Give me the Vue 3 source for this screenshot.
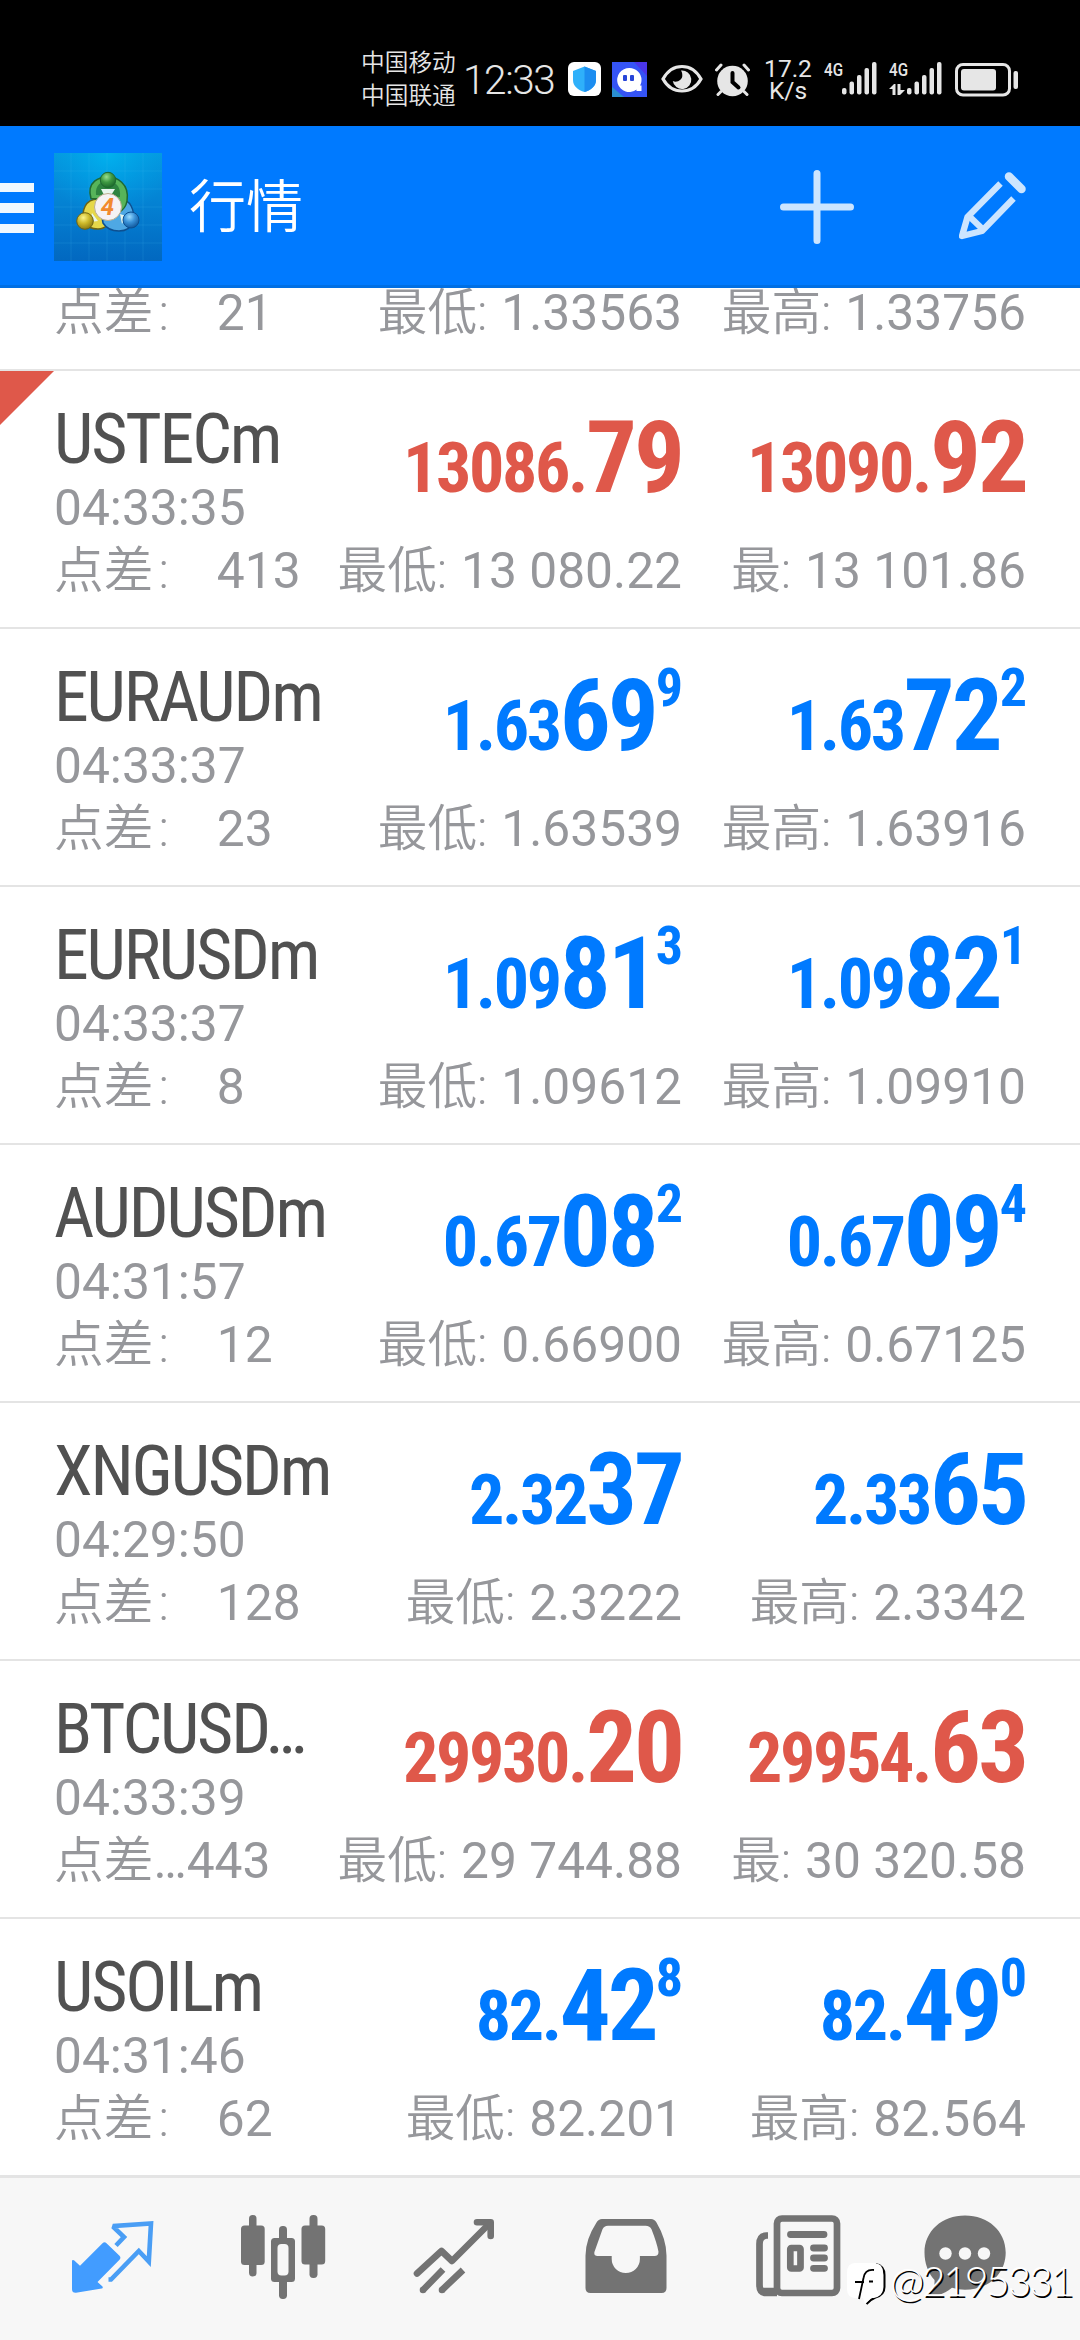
<script setup>
const rows = [
  { symbol: '', time: '', spread: '21', low: '1.33563', high: '1.33756', bid: ['', '', ''], ask: ['', '', ''] },
  { symbol: 'USTECm', time: '04:33:35', spread: '413', low: '13 080.22', high: '13 101.86', highLabel: '最', bid: ['13086.', '79', ''], ask: ['13090.', '92', ''], down: true, flag: true },
  { symbol: 'EURAUDm', time: '04:33:37', spread: '23', low: '1.63539', high: '1.63916', bid: ['1.63', '69', '9'], ask: ['1.63', '72', '2'] },
  { symbol: 'EURUSDm', time: '04:33:37', spread: '8', low: '1.09612', high: '1.09910', bid: ['1.09', '81', '3'], ask: ['1.09', '82', '1'] },
  { symbol: 'AUDUSDm', time: '04:31:57', spread: '12', low: '0.66900', high: '0.67125', bid: ['0.67', '08', '2'], ask: ['0.67', '09', '4'] },
  { symbol: 'XNGUSDm', time: '04:29:50', spread: '128', low: '2.3222', high: '2.3342', bid: ['2.32', '37', ''], ask: ['2.33', '65', ''] },
  { symbol: 'BTCUSD…', time: '04:33:39', spread: '443', tight: true, low: '29 744.88', high: '30 320.58', highLabel: '最', bid: ['29930.', '20', ''], ask: ['29954.', '63', ''], down: true },
  { symbol: 'USOILm', time: '04:31:46', spread: '62', low: '82.201', high: '82.564', bid: ['82.', '42', '8'], ask: ['82.', '49', '0'] },
]
const bars = [
  { x: 0, y: 26, h: 6.5 },
  { x: 7.5, y: 19.5, h: 13 },
  { x: 15, y: 13, h: 19.5 },
  { x: 22.5, y: 6, h: 26.5 },
  { x: 30, y: 0, h: 32.5 },
]
</script>

<template>
  <div class="screen">
    <div class="status">
      <div class="carriers"><span>中国移动</span><span>中国联通</span></div>
      <div class="clock">12:33</div>
      <svg class="s-shield" width="33" height="34" viewBox="0 0 33 34">
        <rect width="33" height="34" rx="6" fill="#fff" />
        <path d="M16.5 4.5 28 9v9c0 6-5 10-11.500 12C10 28 5 24 5 18V9z" fill="#2fb0fa" />
        <path d="M16.500 4.500 28 9v9c0 6-5 10-11.500 12z" fill="#1c8df0" />
      </svg>
      <svg class="s-ghost" width="35" height="35" viewBox="0 0 35 35">
        <rect width="35" height="35" fill="#3554f5" />
        <path d="M0 25 12 35H0z" fill="#2a8ed0" />
        <path d="M22 0h13v14z" fill="#4a35e8" />
        <path d="M17.500 6a12 12 0 0 1 12 12c0 2-.5 4-1.500 5.500h1.500V29h-5v-1.500A12 12 0 1 1 17.500 6z" fill="#fff" />
        <rect x="11" y="13" width="4" height="6" rx="1" fill="#2745d8" />
        <rect x="18" y="13" width="4" height="6" rx="1" fill="#2745d8" />
      </svg>
      <svg class="s-eye" width="42" height="30" viewBox="0 0 42 30" fill="none">
        <path d="M2 15C7 6 13.500 2.500 21 2.500S35 6 40 15C35 24 28.500 27 21 27S7 24 2 15z" stroke="#e6e6e6" stroke-width="3.200" />
        <path d="M20 6.500a9.300 9.300 0 1 1-8.200 10.500c4 2 10-1 9.500-6 0-2-.5-3-1.300-4.500z" fill="#e6e6e6" />
      </svg>
      <svg class="s-alarm" width="35" height="34" viewBox="0 0 35 34" fill="none" stroke-linecap="round">
        <path d="M1.500 7 6 2M33.500 7 29 2M6 28.500 3 31.500M29 28.500 32 31.500" stroke="#e6e6e6" stroke-width="3" />
        <circle cx="17.500" cy="18" r="15.300" fill="#e6e6e6" />
        <path d="M17.500 10v9l6 5.500" stroke="#000" stroke-width="4" />
      </svg>
      <div class="speed"><span>17.2</span><span>K/s</span></div>
      <div class="net"><span>4G</span></div>
      <svg class="s-bars" width="35" height="33" viewBox="0 0 35 33" fill="#e6e6e6">
        <rect v-for="b in bars" :key="b.x" :x="b.x" :y="b.y" width="4.500" :height="b.h" rx="2" />
      </svg>
      <div class="net second">
        <span>4G</span>
        <svg width="17" height="11" viewBox="0 0 17 11" fill="#e6e6e6"><path d="M0 5 5 0h1.500v11h-3V5zM8.500 0h3v6H16l-5 5H8.500z" /></svg>
      </div>
      <svg class="s-bars" width="35" height="33" viewBox="0 0 35 33" fill="#e6e6e6">
        <rect v-for="b in bars" :key="b.x" :x="b.x" :y="b.y" width="4.500" :height="b.h" rx="2" />
      </svg>
      <svg class="s-battery" width="64" height="34" viewBox="0 0 64 34">
        <rect x="1.500" y="1.500" width="53" height="30.500" rx="6.500" fill="none" stroke="#e6e6e6" stroke-width="3" />
        <rect x="6" y="6" width="35" height="21.500" rx="3" fill="#e6e6e6" />
        <rect x="58.500" y="8" width="4.500" height="18" rx="2" fill="#e6e6e6" />
      </svg>
    </div>

    <header class="bar">
      <div class="menu"><i></i><i></i><i></i></div>
      <svg class="logo" width="108" height="108" viewBox="0 0 108 108">
        <defs>
          <linearGradient id="lb" x1="0" y1="0" x2="0" y2="1"><stop offset="0" stop-color="#0499df" /><stop offset=".5" stop-color="#0480d2" /><stop offset="1" stop-color="#0268c0" /></linearGradient>
          <radialGradient id="lg" cx=".5" cy="0" r=".6"><stop offset="0" stop-color="#00b4f0" stop-opacity=".9" /><stop offset="1" stop-color="#00a0e8" stop-opacity="0" /></radialGradient>
          <radialGradient id="g1" cx=".4" cy=".3" r=".7"><stop offset="0" stop-color="#9adf8e" /><stop offset=".5" stop-color="#3f9a43" /><stop offset="1" stop-color="#1c6a2c" /></radialGradient>
          <radialGradient id="g2" cx=".4" cy=".3" r=".7"><stop offset="0" stop-color="#fbf48a" /><stop offset=".5" stop-color="#cdb92a" /><stop offset="1" stop-color="#8f7d12" /></radialGradient>
          <radialGradient id="g3" cx=".4" cy=".3" r=".7"><stop offset="0" stop-color="#9adcff" /><stop offset=".5" stop-color="#3a92d8" /><stop offset="1" stop-color="#135a9e" /></radialGradient>
        </defs>
        <rect width="108" height="108" fill="url(#lb)" />
        <rect width="108" height="108" fill="url(#lg)" />
        <path d="M17 0v108M35 0v108M53 0v108M71 0v108M89 0v108M0 18h108M0 36h108M0 54h108M0 72h108M0 90h108" stroke="#4cc0f5" stroke-opacity=".16" />
        <path d="M30 70c-3-12 1-24 14-24 10 0 14 8 14 16s-7 14-14 14q-9 0-14-6z" fill="#e6d84a" stroke="#6d6414" stroke-width="1.500" />
        <path d="M49 70c-2-8 3-24 16-24 12 0 16 12 14 22-2 8-8 10-14 10q-11 0-16-8z" fill="#4ea8e4" stroke="#0d4f90" stroke-width="1.500" />
        <path d="M37 45.500C32 28 46 24 54 24s22 6 19 24c-1 6-5 10-9 12l-4-13z" fill="#57b45a" stroke="#1f6a31" stroke-width="1.500" />
        <path d="M42 42c-1-10 5-14 12-14s13 5 12 16z" fill="#2e8440" />
        <path d="M47 36h14l-5 8h-5zM38 60l6 8-8 1zM66 61l6 2-4 8z" fill="#e8f6ee" />
        <circle cx="54" cy="27" r="7.700" fill="url(#g1)" stroke="#1f6a31" />
        <circle cx="31" cy="68" r="8.300" fill="url(#g2)" stroke="#6d6414" />
        <circle cx="77" cy="67" r="8" fill="url(#g3)" stroke="#0d4f90" />
        <circle cx="54" cy="54" r="13.500" fill="#f6f2f4" stroke="#bcae90" />
        <text x="53.500" y="62" text-anchor="middle" class="four">4</text>
      </svg>
      <h1>行情</h1>
      <svg class="plus" width="74" height="74" viewBox="0 0 74 74"><path d="M37 3.500v67M3.500 37h67" stroke="#cce5ff" stroke-width="7" stroke-linecap="round" /></svg>
      <svg class="pencil" width="68" height="68" viewBox="0 0 68 68" fill="none" stroke="#cce5ff" stroke-width="6.300" stroke-linejoin="round">
        <path d="M41.500 11.500 8.500 45 3 64l20-5L54.500 26.500" />
        <path d="M10.500 44.500 25 58.500" />
        <path d="M50 4.500 62.500 17" stroke-width="8.500" stroke-linecap="round" />
      </svg>
    </header>

    <main class="list">
      <section v-for="(r, i) in rows" :key="i" class="row" :class="{ down: r.down }">
        <i v-if="r.flag" class="flag"></i>
        <div class="info">
          <div class="symbol"><span>{{ r.symbol }}</span></div>
          <div class="time">{{ r.time }}</div>
          <div class="spread"><span class="cjk">点差<b v-if="!r.tight">:</b></span><span v-if="r.tight">…</span><span v-else class="gap"></span>{{ r.spread }}</div>
        </div>
        <div class="quote bid">
          <div class="price"><span>{{ r.bid[0] }}<big>{{ r.bid[1] }}</big><sup>{{ r.bid[2] }}</sup></span></div>
          <div class="range"><span class="cjk">最低:</span> {{ r.low }}</div>
        </div>
        <div class="quote ask">
          <div class="price"><span>{{ r.ask[0] }}<big>{{ r.ask[1] }}</big><sup>{{ r.ask[2] }}</sup></span></div>
          <div class="range"><span class="cjk">{{ r.highLabel || '最高' }}:</span> {{ r.high }}</div>
        </div>
      </section>
    </main>

    <nav class="tabs">
      <svg viewBox="27 18 171 162">
        <path d="M102.500 83.200q2-2 4 0l13 12.500q1.800 2 0 4L97.500 122l5 4.500q.8 1.500-.8 2L76 132.800q-4 .2-4-3.500v-28q0-2 2-1l6 5.500z" fill="#429cff" />
        <path d="M116 85.500 124 77l-10-9.500.5-1.500 36.500-2.500-2.200 38-10-10.500L111 119.500h-2.500" fill="none" stroke="#4a9ef5" stroke-width="4.600" />
      </svg>
      <svg viewBox="198 18 171 162" fill="#737373">
        <rect x="249" y="55" width="7.500" height="61.500" rx="3.700" /><rect x="241" y="65.500" width="23.700" height="39.500" rx="3.500" />
        <rect x="309.500" y="55" width="8" height="63" rx="3.700" /><rect x="301.500" y="65.500" width="23.700" height="39" rx="3.500" />
        <rect x="279" y="66" width="8" height="73" rx="3.700" /><rect x="271" y="78" width="24" height="44" rx="3.500" />
        <rect x="277.500" y="84" width="11" height="31.500" rx="4" fill="#f7f7f7" />
      </svg>
      <svg viewBox="9 18 171 162" fill="none" stroke="#737373" stroke-width="6.600">
        <path d="M57 113.500 81.500 91 92 101 129 64" stroke-linecap="round" stroke-linejoin="round" />
        <path d="M117 62.200h13.700V76" stroke-linecap="round" stroke-linejoin="round" />
        <path d="M83 109.500 63 130M103 110 82 130" />
        <path d="M63 130h.01M82 130h.01" stroke-linecap="round" />
      </svg>
      <svg viewBox="180 18 171 162">
        <path d="M242 59h49q3.500 0 5.500 3.500 10 17 10 33V128q0 5-5 5h-71q-5 0-5-5V95.500q0-16 11-33 2-3.500 5.500-3.500zm6 6.700q-4 0-5.500 3.500l-8 22.500q-1 4.300 3 4.300h14.200v3a14.100 14.100 0 0 0 28.200 0v-3h14.600q4 0 4-4.300-1.500-8.500-7-22.500-1.500-3.500-6-3.500z" fill="#737373" />
      </svg>
      <svg viewBox="-9 18 171 162" fill="none" stroke="#737373">
        <rect x="57" y="58.500" width="60" height="74.500" rx="5" stroke-width="6.700" />
        <path d="M48 75.500h-1.500Q39.500 76 39.500 84v41q0 8 7 8H57M54 131H43" stroke-width="6.700" />
        <path d="M70.500 74.500h33.500M93.500 88h11M93.500 98h11M93.500 108.300h11" stroke-width="6.800" stroke-linecap="round" />
        <rect x="70.300" y="88" width="10.200" height="20.500" rx="1" stroke-width="6.700" />
      </svg>
      <svg viewBox="162 18 171 162">
        <path d="M245 55.500c23 0 40.700 15.500 40.700 37S268 129.800 245 129.800q-7 0-13-2c-9 7.500-17.500 8.700-26 8.700 6-5 9-9 8.500-16.500-6.500-7-10-17-10-27.500 0-21.500 17.500-37 40.500-37z" fill="#737373" />
        <circle cx="225.500" cy="93.500" r="6.200" fill="#f7f7f7" /><circle cx="245" cy="93.500" r="6.200" fill="#f7f7f7" /><circle cx="264" cy="93.500" r="6.200" fill="#f7f7f7" />
      </svg>
    </nav>

    <div class="mark">
      <svg width="40" height="44" viewBox="0 0 40 44">
        <path d="M29 1q8.500 2 8.500 11v12q0 8-9 10.500-5 2-9 6.500" fill="none" stroke="#000" stroke-width="2" />
        <path d="M8 0h19q9 0 9 10v15q0 8-9 10h-3l-6 6-2-6H9q-9 0-9-9V10Q0 0 8 0z" fill="#fff" />
        <path d="M27 7q-9-1-10.500 8L12 36M8 19h9M22 18.500h4" fill="none" stroke="#000" stroke-width="1.800" />
      </svg>
      <span>@2195331</span>
    </div>
  </div>
</template>

<style>
body { background: #fff; }
</style>

<style scoped>
.screen {
  position: relative;
  width: 1080px;
  height: 2340px;
  display: flex;
  flex-direction: column;
  overflow: hidden;
  background: #fff;
  font-family: Roboto, "Noto Sans CJK SC", sans-serif;
}
svg { display: block; flex: none; }

.status {
  flex: none;
  height: 126px;
  box-sizing: border-box;
  padding: 46px 0 0 361px;
  display: flex;
  align-items: flex-start;
  background: #000;
  color: #e6e6e6;
}
.carriers { display: flex; flex-direction: column; width: 102px; margin-top: 1px; font-size: 23.700px; line-height: 33px; font-weight: 350; }
.clock { width: 105px; font-size: 40.500px; line-height: 68px; letter-spacing: -1.400px; font-weight: 300; white-space: nowrap; }
.s-shield { margin: 16px 11px 0 0; }
.s-ghost { margin: 16px 14px 0 0; }
.s-eye { margin: 18px 12px 0 0; }
.s-alarm { margin: 17px 16px 0 0; }
.speed { display: flex; flex-direction: column; align-items: center; width: 44px; margin: 12px 14px 0 0; font-size: 24.500px; line-height: 22px; }
.net { width: 18px; margin-top: 17px; font-size: 19px; line-height: 14px; font-weight: 500; }
.net span { display: block; transform: scaleX(.8); transform-origin: left; }
.net.second { margin-left: 12px; }
.net svg { margin-top: 7px; }
.s-bars { margin-top: 16px; }
.s-battery { margin: 17px 0 0 13px; }

.bar {
  flex: none;
  height: 162px;
  box-sizing: border-box;
  border-bottom: 3px solid #006fe3;
  display: flex;
  align-items: center;
  background: #007aff;
}
.menu { width: 34px; margin: 5px 20px 0 0; display: flex; flex-direction: column; gap: 11px; }
.menu i { height: 9.500px; background: #f0f8ff; }
.logo { margin-top: 3px; }
.four { font: italic 700 24px Roboto, sans-serif; fill: #f28a2e; }
h1 { margin: 4px 0 0 27px; width: 591px; font-size: 57px; line-height: 80px; font-weight: 350; color: #fff; }
.plus { margin-top: 3px; }
.pencil { margin: 0 0 0 105px; }

.list {
  flex: 1;
  min-height: 0;
  display: flex;
  flex-direction: column;
  justify-content: flex-end;
  overflow: hidden;
}
.row {
  position: relative;
  flex: none;
  box-sizing: border-box;
  height: 258px;
  border-bottom: 2px solid #e4e4e4;
  display: flex;
  color: #96979b;
  font-size: 49.700px;
  white-space: pre;
}
.row:last-child { height: 256px; border-bottom: 0; }
.flag { position: absolute; left: 0; top: 0; width: 54px; height: 54px; background: #df584a; clip-path: polygon(0 0, 100% 0, 0 100%); }
.info { width: 282px; padding: 28px 0 0 54px; }
.symbol { height: 80px; line-height: 80px; font-size: 70px; color: #515151; }
.symbol span { display: inline-block; font-family: "Roboto Condensed", Roboto, sans-serif; font-stretch: 75%; letter-spacing: -.031em; }
.time { height: 58px; line-height: 58px; }
.spread { height: 68px; line-height: 68px; }
.cjk { font-weight: 350; }
.cjk b { font-weight: 350; margin-left: 5px; }
.gap { display: inline-block; width: 48px; }
.quote { display: flex; flex-direction: column; align-items: flex-end; }
.bid { width: 346px; }
.ask { width: 344px; }
.price { height: 108px; line-height: 108px; padding: 33px 0 24px; font-size: 100px; }
.price span { display: inline-block; font-family: "Roboto Condensed", Roboto, sans-serif; font-stretch: 75%; font-weight: 700; font-size: 70px; line-height: 0; color: #007aff; letter-spacing: -.034em; }
.down .price span { color: #df584a; }
.price big { font-size: 101px; line-height: 0; letter-spacing: -.03em; }
.price sup { font-size: 54px; line-height: 0; vertical-align: 44px; letter-spacing: -.02em; }
.range { height: 70px; line-height: 70px; }
.range .cjk { margin-right: 1.500px; }

.tabs {
  flex: none;
  height: 165px;
  box-sizing: border-box;
  border-top: 3px solid #e4e4e4;
  padding: 0 27px;
  display: flex;
  background: #f7f7f7;
}
.tabs svg { width: 171px; height: 162px; }

.mark { position: absolute; left: 847px; top: 2263px; display: flex; align-items: flex-start; }
.mark span { margin-left: 3px; font: 300 41px/35px Lato, sans-serif; letter-spacing: -2.300px; color: #fff; text-shadow: 1.500px 1.500px 0 #000; }
</style>
